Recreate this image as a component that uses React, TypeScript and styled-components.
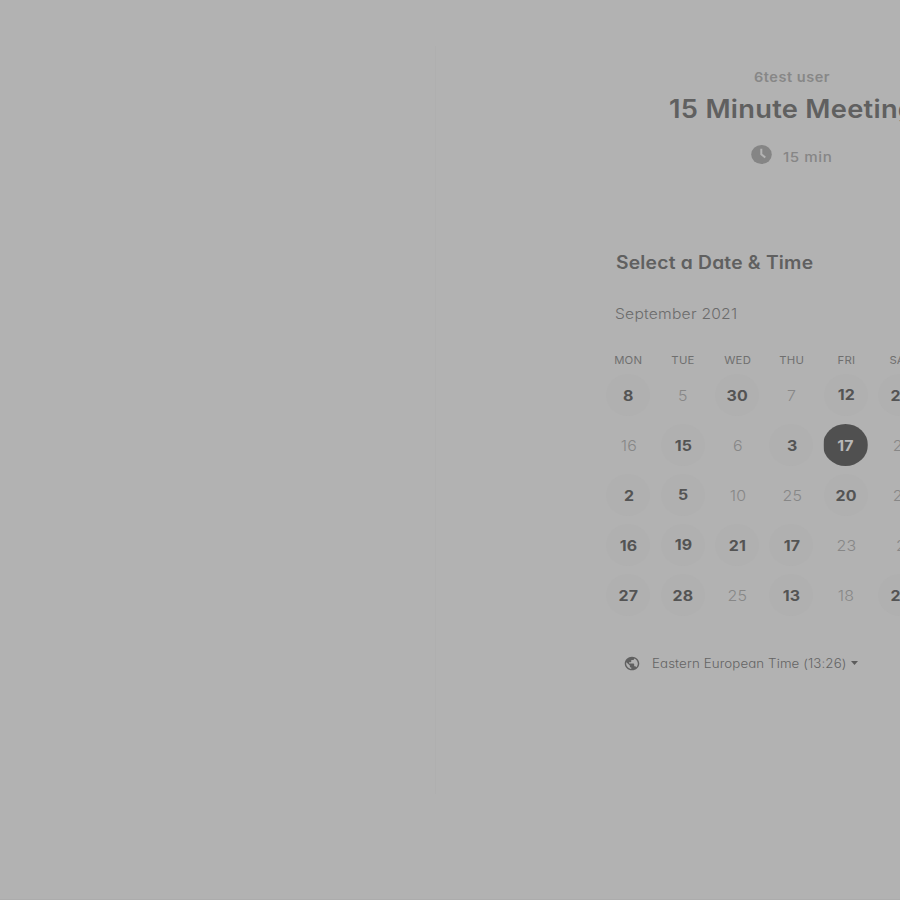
import React from "react";
import styled, { createGlobalStyle } from "styled-components";

const GlobalStyle = createGlobalStyle`
  * { box-sizing: border-box; }
  html, body { margin: 0; background: #b2b2b2; overflow: hidden; }
  body { font-family: Inter, Lato, sans-serif; font-feature-settings: "cv11"; }
`;

const Page = styled.main`
  width: 900px;
  height: 900px;
  padding: 46px 0 0 435px;
  background: #b2b2b2;
  border-bottom: 1px solid #acacac;
  overflow: hidden;
`;

const Card = styled.section`
  width: 700px;
  height: 748px;
  border-left: 1px solid #afafaf;
`;

const Header = styled.header`
  display: flex;
  flex-direction: column;
  height: 204px;
  padding-top: 21px;
`;

/* Extended letterforms: the type is widened horizontally from its left edge. */
const Wide = styled.span<{ $by: number }>`
  display: inline-block;
  transform: scaleX(${(p) => p.$by});
  transform-origin: left center;
  white-space: nowrap;
`;

const Host = styled.div`
  margin-left: 318px;
  font-size: 13.5px;
  line-height: 21px;
  font-weight: 560;
  letter-spacing: 0.5px;
  color: #878787;
`;

const Title = styled.h1`
  margin: 3px 0 0 232.5px;
  font-size: 25px;
  line-height: 36px;
  font-weight: 630;
  letter-spacing: 0.25px;
  color: #606060;
`;

const Duration = styled.div`
  display: flex;
  align-items: center;
  gap: 11px;
  margin: 17px 0 0 315px;
  height: 22px;
  font-size: 13.5px;
  font-weight: 540;
  letter-spacing: 0.5px;
  color: #868686;

  span { padding-top: 3px; }
`;

const Picker = styled.div`
  padding-left: 165px;
`;

const Heading = styled.h2`
  margin: 0 0 0 14.5px;
  font-size: 18px;
  line-height: 26px;
  font-weight: 590;
  letter-spacing: 0.2px;
  color: #606060;
`;

const Month = styled.div`
  margin: 27px 0 0 14px;
  font-size: 14.5px;
  line-height: 22px;
  font-weight: 350;
  letter-spacing: 0.2px;
  color: #6c6c6c;
`;

const Week = styled.div`
  display: grid;
  grid-template-columns: repeat(7, 54.4px);
  justify-items: center;
`;

const Weekdays = styled(Week)`
  margin-top: 27px;
  height: 18px;
  font-size: 10.5px;
  line-height: 18px;
  font-weight: 370;
  letter-spacing: 0.2px;
  color: #6f6f6f;

  div { transform: translateX(0.2px) scaleX(1.08); }
`;

const Days = styled(Week)`
  grid-auto-rows: 50px;
  align-items: center;
`;

const Day = styled.div<{ $state: "open" | "closed" | "selected"; $lift: number }>`
  display: flex;
  align-items: center;
  justify-content: center;
  width: 44px;
  height: 42px;
  border-radius: 50%;
  font-size: 14.5px;
  line-height: 18px;
  letter-spacing: 0.1px;
  font-weight: ${(p) => (p.$state === "closed" ? 300 : 700)};
  color: ${(p) => (p.$state === "closed" ? "#878787" : p.$state === "selected" ? "#b8b8b8" : "#545454")};
  background: ${(p) => (p.$state === "closed" ? "transparent" : p.$state === "selected" ? "#505050" : "#b0b0b0")};
  ${(p) => p.$state === "selected" && "width: 45px; clip-path: inset(0 0 0 1px); margin-left: -1px;"}

  span {
    margin-top: ${(p) => 2 - p.$lift * 2}px;
    transform: translateX(${(p) => (p.$state === "selected" ? 0 : 0.5)}px) scaleX(1.1);
  }
`;

const Timezone = styled.div`
  display: flex;
  align-items: center;
  height: 20px;
  margin: 33px 0 0 23px;
  font-size: 12.5px;
  font-weight: 360;
  letter-spacing: 0.1px;
  color: #646464;
`;

const ZoneName = styled.div`
  width: 199px;
  margin-left: 12px;
`;

const ClockIcon = () => (
  <svg width="21" height="20" viewBox="0 0 21 20">
    <ellipse cx="10.5" cy="9.5" rx="10.3" ry="9.5" fill="#858585" />
    <path d="M10.3 3.8V9.3L14.3 12.5" fill="none" stroke="#b4b4b4" strokeWidth="2" />
  </svg>
);

const GlobeIcon = () => (
  <svg width="16" height="15" viewBox="1 1 22 22" preserveAspectRatio="none">
    <path
      fill="#606060"
      d="M12 2C6.48 2 2 6.48 2 12s4.48 10 10 10 10-4.48 10-10S17.52 2 12 2zm-1 17.93c-3.95-.49-7-3.85-7-7.93 0-.62.08-1.21.21-1.79L9 15v1c0 1.1.9 2 2 2v1.93zm6.9-2.54c-.26-.81-1-1.39-1.9-1.39h-1v-3c0-.55-.45-1-1-1H8v-2h2c.55 0 1-.45 1-1V7h2c1.1 0 2-.9 2-2v-.41c2.93 1.19 5 4.06 5 7.41 0 2.08-.8 3.97-2.1 5.39z"
    />
  </svg>
);

const CaretIcon = () => (
  <svg width="7" height="4" viewBox="0 0 7 4">
    <path d="M0 0H7L3.5 4Z" fill="#5c5c5c" />
  </svg>
);

type DayData = { value: number; open?: boolean; selected?: boolean; lift?: number };

const open = (value: number, lift = 0): DayData => ({ value, open: true, lift });
const closed = (value: number): DayData => ({ value });

const weekdays = ["MON", "TUE", "WED", "THU", "FRI", "SAT", "SUN"];
const days: DayData[] = [
  open(8), closed(5), open(30), closed(7), open(12, 1), open(22), closed(4),
  closed(16), open(15), closed(6), open(3), { value: 17, selected: true }, closed(21), closed(9),
  open(2), open(5, 1), closed(10), closed(25), open(20), closed(21), closed(11),
  open(16), open(19, 1), open(21), open(17), closed(23), closed(2), closed(14),
  open(27), open(28), closed(25), open(13), closed(18), open(29), closed(24),
];

export default function App() {
  return (
    <>
      <GlobalStyle />
      <Page>
        <Card>
          <Header>
            <Host><Wide $by={1.075}>6test user</Wide></Host>
            <Title><Wide $by={1.091}>15 Minute Meeting</Wide></Title>
            <Duration>
              <ClockIcon />
              <Wide $by={1.12}>15 min</Wide>
            </Duration>
          </Header>
          <Picker>
            <Heading><Wide $by={1.07}>Select a Date &amp; Time</Wide></Heading>
            <Month><Wide $by={1.08}>September 2021</Wide></Month>
            <Weekdays>
              {weekdays.map((name) => <div key={name}>{name}</div>)}
            </Weekdays>
            <Days>
              {days.map((day, i) => (
                <Day
                  key={i}
                  $state={day.selected ? "selected" : day.open ? "open" : "closed"}
                  $lift={day.lift ?? 0}
                >
                  <span>{day.value}</span>
                </Day>
              ))}
            </Days>
            <Timezone>
              <GlobeIcon />
              <ZoneName><Wide $by={1.064}>Eastern European Time (13:26)</Wide></ZoneName>
              <CaretIcon />
            </Timezone>
          </Picker>
        </Card>
      </Page>
    </>
  );
}
